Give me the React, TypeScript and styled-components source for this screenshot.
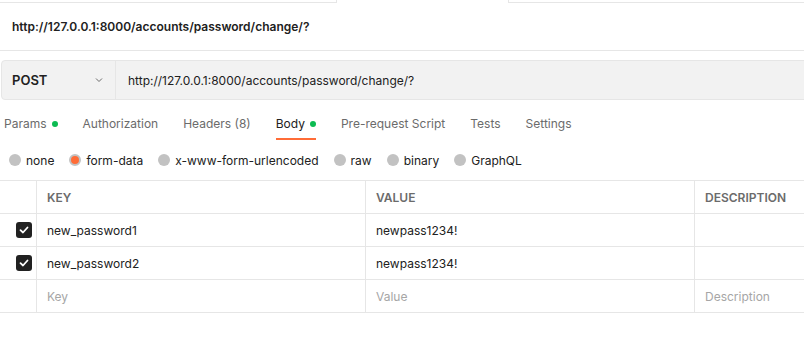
import styled, { createGlobalStyle } from "styled-components";

const GlobalStyle = createGlobalStyle`
  body {
    margin: 0;
    background: #ffffff;
    font-family: Inter, "Noto Sans", "Liberation Sans", sans-serif;
    color: #212121;
    overflow: hidden;
  }
`;

const Page = styled.div`
  width: 804px;
  height: 350px;
  overflow: hidden;
  background: #ffffff;
`;

const TabStrip = styled.div`
  display: flex;
  height: 3px;
`;

const DocTab = styled.div<{ $active?: boolean; $width?: number; $side?: "left" | "right" }>`
  box-sizing: border-box;
  height: 3px;
  flex: ${(p) => (p.$width ? `0 0 ${p.$width}px` : "1")};
  border-bottom: ${(p) => (p.$active ? "none" : "1px solid #e6e6e6")};
  border-right: ${(p) => (p.$side === "left" ? "1px solid #e6e6e6" : "none")};
  border-left: ${(p) => (p.$side === "right" ? "1px solid #e6e6e6" : "none")};
`;

const TitleBar = styled.div`
  height: 47px;
  display: flex;
  align-items: center;
  padding: 0 12px;
  border-bottom: 1px solid #e6e6e6;
  font-size: 12px;
  font-weight: 600;
  color: #212121;
`;

const RequestBar = styled.div`
  display: flex;
  height: 38px;
  margin: 9px -10px 0 1px;
  background: #f2f2f2;
  border: 1px solid #e6e6e6;
  border-radius: 4px;
`;

const MethodSelect = styled.div`
  display: flex;
  align-items: center;
  justify-content: space-between;
  width: 114px;
  box-sizing: border-box;
  padding: 0 11px 0 10px;
  border-right: 1px solid #e6e6e6;
  font-size: 13px;
  font-weight: 600;
  color: #212121;
`;

const UrlInput = styled.div`
  display: flex;
  align-items: center;
  padding-left: 12px;
  font-size: 12px;
  color: #212121;
`;

const TabRow = styled.div`
  display: flex;
  gap: 25px;
  padding-left: 4px;
  margin-top: 8px;
`;

const Tab = styled.div<{ $active?: boolean }>`
  display: flex;
  align-items: center;
  gap: 5px;
  padding: 8px 0 6px;
  line-height: 16px;
  font-size: 12px;
  color: ${(p) => (p.$active ? "#212121" : "#6b6b6b")};
  border-bottom: 2px solid ${(p) => (p.$active ? "#ff6c37" : "transparent")};
`;

const Dot = styled.span`
  width: 6px;
  height: 6px;
  border-radius: 50%;
  background: #0cbb52;
`;

const RadioRow = styled.div`
  display: flex;
  align-items: center;
  gap: 15px;
  padding-left: 9px;
  margin-top: 12px;
  height: 16px;
`;

const RadioOption = styled.label`
  display: flex;
  align-items: center;
  gap: 5px;
  font-size: 12px;
  color: #212121;
`;

const Radio = styled.span<{ $checked?: boolean }>`
  box-sizing: border-box;
  width: 12px;
  height: 12px;
  border-radius: 50%;
  background: ${(p) => (p.$checked ? "#ff6c37" : "#c2c2c2")};
  border: ${(p) => (p.$checked ? "2px solid #c2c2c2" : "none")};
`;

const Table = styled.div`
  margin-top: 12px;
  margin-right: -10px;
  border-top: 1px solid #e6e6e6;
`;

const Row = styled.div`
  display: grid;
  grid-template-columns: 37px 329px 329px 1fr;
  height: 33px;
  box-sizing: border-box;
  border-bottom: 1px solid #e6e6e6;
`;

const Cell = styled.div<{ $head?: boolean; $placeholder?: boolean }>`
  display: flex;
  align-items: center;
  padding-left: 10px;
  border-right: 1px solid #e6e6e6;
  font-size: 12px;
  font-weight: ${(p) => (p.$head ? 600 : 400)};
  color: ${(p) => (p.$head ? "#6b6b6b" : p.$placeholder ? "#a6a6a6" : "#212121")};
  white-space: nowrap;
`;

const CheckCell = styled.div`
  display: flex;
  align-items: center;
  padding-left: 16px;
  border-right: 1px solid #e6e6e6;
`;

const CheckBox = styled.span`
  width: 16px;
  height: 16px;
  border-radius: 3px;
  background: #212121;
  display: flex;
  align-items: center;
  justify-content: center;
`;

const Check = () => (
  <CheckBox>
    <svg width="10" height="10" viewBox="0 0 10 10" fill="none">
      <path d="M1.5 5.2 L4 7.5 L8.5 2.5" stroke="#fff" strokeWidth="1.8" strokeLinecap="round" strokeLinejoin="round" />
    </svg>
  </CheckBox>
);

const Chevron = () => (
  <svg width="10" height="10" viewBox="0 0 10 10" fill="none">
    <path d="M2 3.5 L5 6.5 L8 3.5" stroke="#6b6b6b" strokeWidth="1" />
  </svg>
);

const url = "http://127.0.0.1:8000/accounts/password/change/?";

const tabs = [
  { label: "Params", dot: true },
  { label: "Authorization" },
  { label: "Headers (8)" },
  { label: "Body", dot: true, active: true },
  { label: "Pre-request Script" },
  { label: "Tests" },
  { label: "Settings" },
];

const bodyTypes = ["none", "form-data", "x-www-form-urlencoded", "raw", "binary", "GraphQL"];

const rows = [
  { key: "new_password1", value: "newpass1234!" },
  { key: "new_password2", value: "newpass1234!" },
];

export default function App() {
  return (
    <Page>
      <GlobalStyle />
      <TabStrip>
        <DocTab $width={337} $side="left" />
        <DocTab $width={171} $active />
        <DocTab $side="right" />
      </TabStrip>
      <TitleBar>{url}</TitleBar>
      <RequestBar>
        <MethodSelect>
          POST
          <Chevron />
        </MethodSelect>
        <UrlInput>{url}</UrlInput>
      </RequestBar>
      <TabRow>
        {tabs.map((t) => (
          <Tab key={t.label} $active={t.active}>
            {t.label}
            {t.dot && <Dot />}
          </Tab>
        ))}
      </TabRow>
      <RadioRow>
        {bodyTypes.map((b) => (
          <RadioOption key={b}>
            <Radio $checked={b === "form-data"} />
            {b}
          </RadioOption>
        ))}
      </RadioRow>
      <Table>
        <Row>
          <CheckCell />
          <Cell $head>KEY</Cell>
          <Cell $head>VALUE</Cell>
          <Cell $head>DESCRIPTION</Cell>
        </Row>
        {rows.map((r) => (
          <Row key={r.key}>
            <CheckCell>
              <Check />
            </CheckCell>
            <Cell>{r.key}</Cell>
            <Cell>{r.value}</Cell>
            <Cell />
          </Row>
        ))}
        <Row>
          <CheckCell />
          <Cell $placeholder>Key</Cell>
          <Cell $placeholder>Value</Cell>
          <Cell $placeholder>Description</Cell>
        </Row>
      </Table>
    </Page>
  );
}
